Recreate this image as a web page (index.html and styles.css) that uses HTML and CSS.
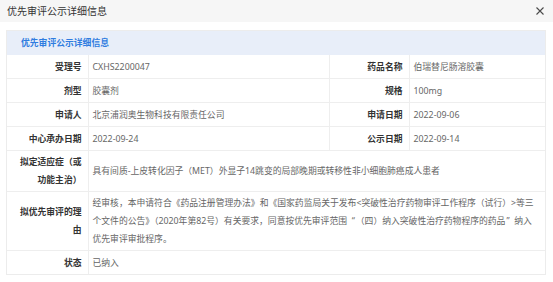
FILE: index.html
```html
<!DOCTYPE html>
<html lang="zh-CN">
<head>
<meta charset="utf-8">
<title>优先审评公示详细信息</title>
<link rel="stylesheet" href="styles.css">
</head>
<body>
<div class="dialog">
  <div class="dlg-head">
    <span class="dlg-title">优先审评公示详细信息</span>
    <span class="close" aria-label="关闭">
      <svg width="8" height="8" viewBox="0 0 8 8"><path d="M0.5 0.5 L7.5 7.5 M7.5 0.5 L0.5 7.5" stroke="#4a4a4a" stroke-width="1.1" fill="none"/></svg>
    </span>
  </div>
  <div class="dlg-body">
    <div class="panel">
      <div class="panel-title">优先审评公示详细信息</div>
      <table class="info">
        <colgroup>
          <col class="c-label1"><col class="c-val1"><col class="c-label2"><col class="c-val2">
        </colgroup>
        <tr>
          <th>受理号</th><td>CXHS2200047</td>
          <th>药品名称</th><td>伯瑞替尼肠溶胶囊</td>
        </tr>
        <tr>
          <th>剂型</th><td>胶囊剂</td>
          <th>规格</th><td>100mg</td>
        </tr>
        <tr>
          <th>申请人</th><td>北京浦润奥生物科技有限责任公司</td>
          <th>申请日期</th><td>2022-09-06</td>
        </tr>
        <tr>
          <th>中心承办日期</th><td>2022-09-24</td>
          <th>公示日期</th><td>2022-09-14</td>
        </tr>
        <tr class="multi">
          <th>拟定适应症（或功能主治）</th>
          <td colspan="3">具有间质-上皮转化因子（MET）外显子14跳变的局部晚期或转移性非小细胞肺癌成人患者</td>
        </tr>
        <tr class="multi">
          <th>拟优先审评的理由</th>
          <td colspan="3">经审核，本申请符合《药品注册管理办法》和《国家药监局关于发布&lt;突破性治疗药物审评工作程序（试行）&gt;等三个文件的公告》（2020年第82号）有关要求，同意按优先审评范围<span class="q-open">“</span>（四）纳入突破性治疗药物程序的药品<span class="q-close">”</span>纳入优先审评审批程序。</td>
        </tr>
        <tr>
          <th>状态</th><td colspan="3">已纳入</td>
        </tr>
      </table>
    </div>
  </div>
</div>
</body>
</html>
```

FILE: styles.css
```css
* { box-sizing: border-box; }
html, body { margin: 0; padding: 0; background: #ffffff; }
body {
  font-family: "Noto Sans", "Noto Sans CJK SC", sans-serif;
  color: #333;
}
.dialog { width: 553px; }
.dlg-head {
  height: 22px;
  background: #f6f6f6;
  display: flex;
  align-items: center;
  justify-content: space-between;
  padding: 0 9px 0 7px;
}
.dlg-title {
  font-size: 10px;
  color: #333;
  line-height: 14px;
}
.close { display: flex; align-items: center; }
.dlg-body { padding: 8px 7px 0 6px; }
.panel {
  border: 1px solid #ececec;
}
.panel-title {
  height: 24px;
  background: #e8eef9;
  color: #2f7ce0;
  font-weight: bold;
  font-size: 8.8px;
  line-height: 24px;
  padding-left: 14px;
}
.info {
  width: 100%;
  border-collapse: collapse;
  table-layout: fixed;
  font-size: 8.8px;
  line-height: 18px;
}
.c-label1 { width: 81px; }
.c-val1 { width: 241px; }
.c-label2 { width: 80px; }
.info th, .info td {
  border: 1px solid #eeeeee;
  padding: 2.5px 5px 2.5px 4px;
  vertical-align: middle;
}
.info th { padding: 2.5px 6px 2.5px 6px; }
.info .multi th, .info .multi td { padding-top: 2px; padding-bottom: 2px; }
.info tr:first-child th, .info tr:first-child td { border-top: none; }
.info th:first-child { border-left: none; }
.info td:last-child { border-right: none; }
.info tr:last-child th, .info tr:last-child td { border-bottom: none; }
.info th {
  text-align: right;
  font-weight: bold;
  color: #333;
}
.info td {
  text-align: left;
  color: #666;
  font-weight: normal;
}
.q-open, .q-close {
  display: inline-block;
  width: 1em;
}
.q-open { text-align: right; padding-right: 1px; }
.q-close { text-align: left; padding-left: 1px; }
```
